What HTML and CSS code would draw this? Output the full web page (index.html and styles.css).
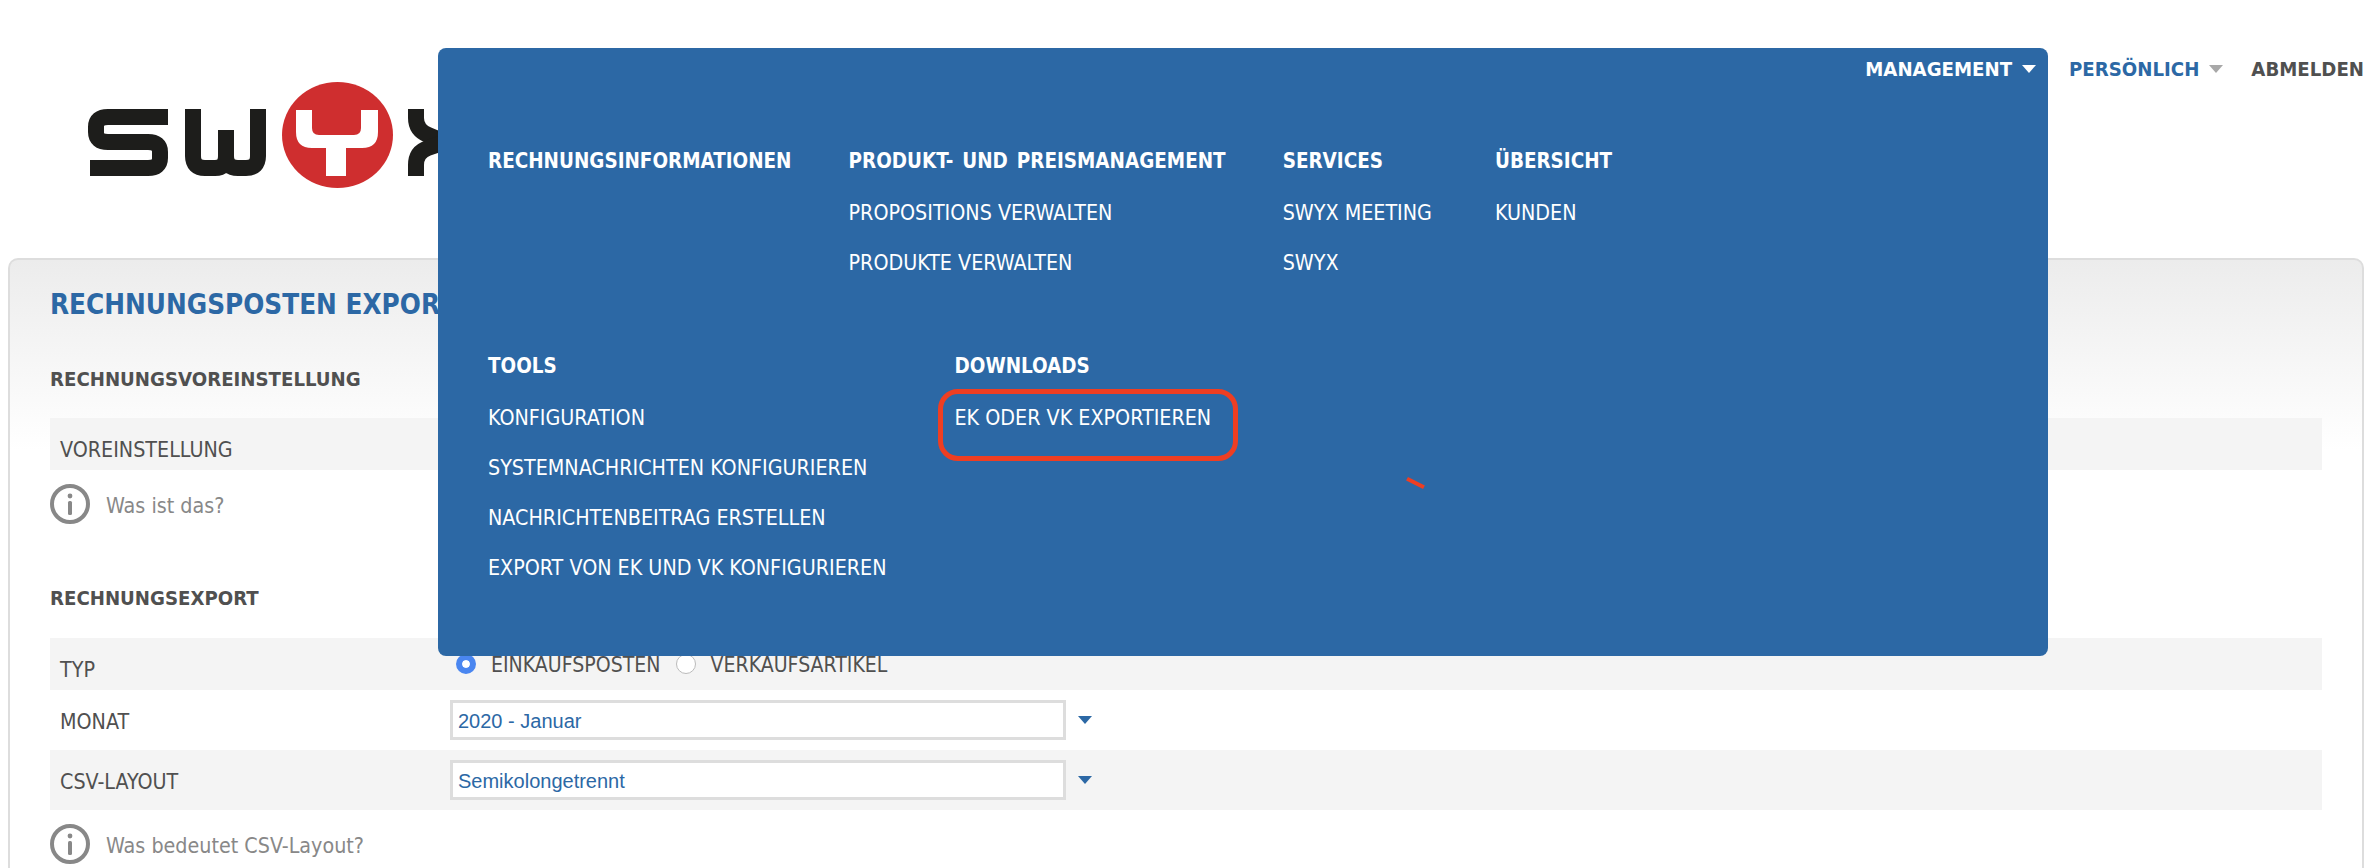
FILE: index.html
```html
<!DOCTYPE html>
<html lang="de">
<head>
<meta charset="utf-8">
<title>Rechnungsposten Export</title>
<link rel="stylesheet" href="styles.css">
</head>
<body>
<header class="header">
  <svg class="logo" width="360" height="110" viewBox="80 80 360 110" role="img" aria-label="Swyx">
    <g class="logo-ink">
      <path d="M168 117H108Q96 117 96 127V132Q96 142 108 142H148Q160 142 160 152V158Q160 168 148 168H90"/>
      <path d="M193 109V156Q193 168 205 168H215Q226 168 226 156V130M226 156Q226 168 238 168H246Q258 168 258 156V109"/>
      <path d="M416 109V118Q416 130 428 135L445 142"/>
      <path d="M416 176V165Q416 152 428 148L445 142"/>
    </g>
    <ellipse class="logo-disc" cx="337.5" cy="135" rx="55.5" ry="53"/>
    <path class="logo-y" d="M296 110H312V128Q312 135 319 135H354Q361 135 361 128V110H378V132Q378 148 362 148H346V176H326V148H312Q296 148 296 132Z"/>
  </svg>
  <nav class="topnav">
    <a class="topnav-item is-open">MANAGEMENT<span class="caret caret-white"></span></a>
    <a class="topnav-item is-blue">PERSÖNLICH<span class="caret caret-grey"></span></a>
    <a class="topnav-item is-dark">ABMELDEN</a>
  </nav>
  <div class="mega">
    <div class="mega-row">
      <div class="mega-col"><h4>RECHNUNGSINFORMATIONEN</h4></div>
      <div class="mega-col"><h4>PRODUKT- UND PREISMANAGEMENT</h4><a>PROPOSITIONS VERWALTEN</a><a>PRODUKTE VERWALTEN</a></div>
      <div class="mega-col"><h4>SERVICES</h4><a>SWYX MEETING</a><a>SWYX</a></div>
      <div class="mega-col mega-col-last"><h4>ÜBERSICHT</h4><a>KUNDEN</a></div>
    </div>
    <div class="mega-row mega-row-2">
      <div class="mega-col"><h4>TOOLS</h4><a>KONFIGURATION</a><a>SYSTEMNACHRICHTEN KONFIGURIEREN</a><a>NACHRICHTENBEITRAG ERSTELLEN</a><a>EXPORT VON EK UND VK KONFIGURIEREN</a></div>
      <div class="mega-col"><h4>DOWNLOADS</h4><a>EK ODER VK EXPORTIEREN</a></div>
    </div>
  </div>
  <div class="mark-box"></div>
  <div class="mark-tick"></div>
</header>
<main class="card">
  <h2>RECHNUNGSPOSTEN EXPORTIEREN</h2>
  <h3 class="sec-first">RECHNUNGSVOREINSTELLUNG</h3>
  <div class="row row-short row-shade"><span class="label label-low">VOREINSTELLUNG</span></div>
  <div class="info">
    <svg width="40" height="40" viewBox="0 0 40 40"><circle cx="20" cy="20" r="18" fill="none" stroke="#888" stroke-width="4"/><rect x="18" y="17" width="4" height="14" rx="1.5" fill="#888"/><circle cx="20" cy="12" r="2.4" fill="#888"/></svg>
    <span class="info-text">Was ist das?</span>
  </div>
  <h3 class="sec-next">RECHNUNGSEXPORT</h3>
  <div class="row row-short row-shade">
    <span class="label label-low">TYP</span>
    <div class="radios">
      <span class="radio radio-on"></span><span class="radio-text">EINKAUFSPOSTEN</span>
      <span class="radio"></span><span class="radio-text">VERKAUFSARTIKEL</span>
    </div>
  </div>
  <div class="row">
    <span class="label">MONAT</span>
    <div class="select-wrap"><div class="select">2020 - Januar</div><span class="caret caret-blue"></span></div>
  </div>
  <div class="row row-shade">
    <span class="label">CSV-LAYOUT</span>
    <div class="select-wrap"><div class="select">Semikolongetrennt</div><span class="caret caret-blue"></span></div>
  </div>
  <div class="info">
    <svg width="40" height="40" viewBox="0 0 40 40"><circle cx="20" cy="20" r="18" fill="none" stroke="#888" stroke-width="4"/><rect x="18" y="17" width="4" height="14" rx="1.5" fill="#888"/><circle cx="20" cy="12" r="2.4" fill="#888"/></svg>
    <span class="info-text">Was bedeutet CSV-Layout?</span>
  </div>
</main>
</body>
</html>
```
FILE: styles.css
```css
* { box-sizing: border-box; }
html, body { margin: 0; height: 868px; overflow: hidden; background: #fff; }
body { font-family: "DejaVu Sans", sans-serif; font-stretch: condensed; color: #505050; font-size: 21.3px; }

.header { position: relative; height: 258px; padding-top: 54px; }
.logo { position: absolute; left: 80px; top: 80px; }
.logo-ink path { fill: none; stroke: #1d1d1b; stroke-width: 16; }
.logo-disc { fill: #cf2e2f; }
.logo-y { fill: #fff; }

.topnav { position: relative; z-index: 2; display: flex; justify-content: flex-end; align-items: center; height: 30px; padding-right: 4px; font-weight: 700; font-size: 20.2px; }
.topnav-item { display: flex; align-items: center; margin-left: 33px; }
.topnav-item.is-dark { margin-left: 28px; }
.is-open { color: #fff; }
.is-blue { color: #2c68a5; }
.is-dark { color: #505050; }
.caret { display: inline-block; width: 0; height: 0; border-left: 7px solid transparent; border-right: 7px solid transparent; border-top: 8px solid; margin-left: 10px; }
.caret-white { border-top-color: #fff; }
.caret-grey { border-top-color: #a8a8a8; }
.caret-blue { border-top-color: #2c68a5; }

.mega { position: absolute; z-index: 1; left: 438px; top: 48px; width: 1610px; height: 608px; background: #2c68a5; border-radius: 8px; padding: 87px 50px 0; color: #fff; }
.mega-row { display: flex; gap: 57px; height: 205px; }
.mega-row-2 { gap: 68px; }
.mega-col-last { margin-left: 6px; }
.mega-col h4 { margin: 0 0 2px; padding-top: 1px; font-size: 20.45px; word-spacing: 2.5px; font-weight: 700; line-height: 50px; }
.mega-col a { display: block; line-height: 50px; font-size: 21.3px; }

.mark-box { position: absolute; z-index: 3; left: 938px; top: 389px; width: 300px; height: 72px; border: 5px solid #ee3e22; border-radius: 20px; }
.mark-tick { position: absolute; z-index: 3; left: 1406px; top: 481px; width: 19px; height: 4px; background: #ee3e22; transform: rotate(27deg); }

.card { margin: 0 4px 0 8px; height: 610px; border: 2px solid #ddd; border-bottom: 0; border-radius: 10px 10px 0 0; padding: 25px 40px 0 40px; background: linear-gradient(#ececec, #fff 190px); overflow: hidden; }
h2 { margin: 0; font-size: 27.6px; line-height: 40px; font-weight: 700; color: #2c68a5; }
h3 { margin: 0; font-size: 20.2px; line-height: 30px; font-weight: 700; color: #505050; }
.sec-first { margin-top: 39px; margin-bottom: 24px; }
.sec-next { margin-top: 59px; margin-bottom: 25px; }

.row { display: grid; grid-template-columns: 390px 1fr; align-items: center; height: 60px; padding-left: 10px; }
.row-short { height: 52px; }
.row-shade { background: #f4f4f4; }
.label { padding-top: 2px; }
.label-low { padding-top: 10px; }

.info { display: flex; align-items: center; gap: 16px; margin-top: 14px; height: 40px; color: #888; }
.info-text { padding-top: 2px; }

.radios { display: flex; align-items: center; padding-left: 6px; }
.radio { width: 20px; height: 20px; border-radius: 50%; background: #fff; border: 1px solid #bbb; margin-right: 15px; }
.radio-on { background: #4a86f0; border: 6.5px solid #4a86f0; box-shadow: inset 0 0 0 10px #fff; }
.radio-text { margin-right: 15px; font-size: 21.1px; }

.select-wrap { display: flex; align-items: center; }
.select { width: 616px; height: 40px; background: #fff; border: 3px solid #ddd; padding-left: 5px; font-family: "Liberation Sans", Arial, sans-serif; font-size: 20px; line-height: 37px; color: #2c68a5; font-stretch: normal; }
.select-wrap .caret { margin-left: 12px; }
```
